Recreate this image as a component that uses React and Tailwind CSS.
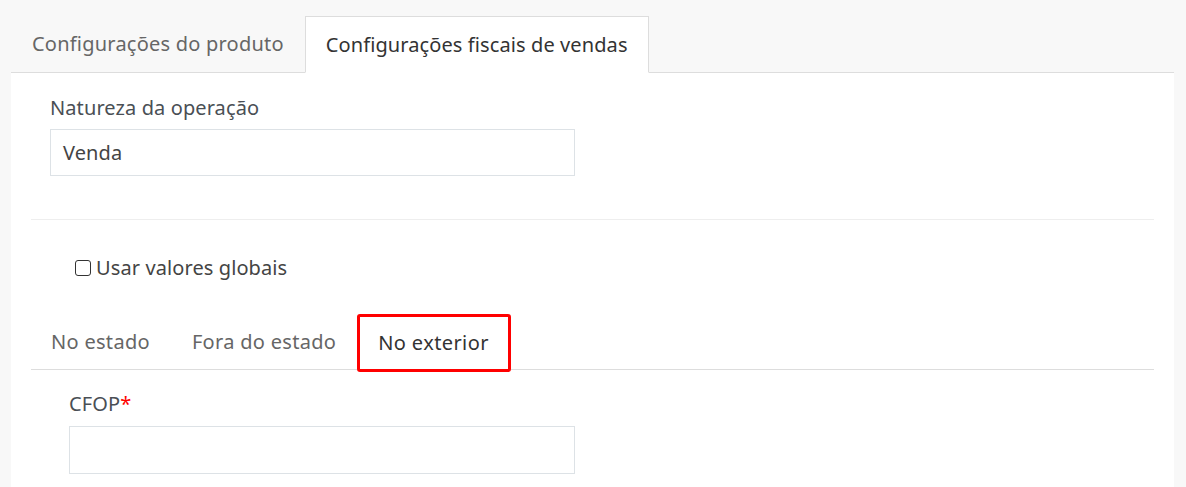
import { useState } from 'react';

const font = { fontFamily: '"Noto Sans", "Open Sans", sans-serif' };

const App = () => {
  const [tab, setTab] = useState('fiscal');
  const [region, setRegion] = useState('exterior');
  const [useGlobal, setUseGlobal] = useState(false);

  return (
    <div className="h-[487px] w-full bg-[#f8f8f8] pl-[11px] pr-[12px] pt-[16px] overflow-hidden" style={font}>
      {/* main tabs */}
      <div className="flex h-[57px] border-b border-[#dddddd]">
        <button
          type="button"
          onClick={() => setTab('produto')}
          className={`px-[21px] text-[20px] tracking-[0.22px] ${tab === 'produto' ? 'bg-white border border-[#dddddd] border-b-white -mb-px text-[#333]' : 'text-[#666]'}`}
        >
          Configurações do produto
        </button>
        <button
          type="button"
          onClick={() => setTab('fiscal')}
          className={`px-[20px] text-[20px] tracking-[0.1px] ${tab === 'fiscal' ? 'bg-white border border-[#dddddd] border-b-white -mb-px text-[#333]' : 'text-[#666]'}`}
        >
          Configurações fiscais de vendas
        </button>
      </div>

      <div className="bg-white h-full px-[20px]">
        <div className="px-[19px] pt-[23px] pb-[43px]">
          <label className="block text-[20px] leading-[24px] text-[#4a4f55] tracking-[0.1px]">Natureza da operação</label>
          <div className="mt-[9px] w-[525px] h-[47px] border border-[#dde2e6] flex items-center px-[12px] text-[20px] text-[#444] tracking-[0.1px]">
            Venda
          </div>
        </div>

        <div className="border-t border-[#eeeeee]" />

        <label className="flex gap-[5px] pl-[44px] pt-[35px] h-[94px] items-start text-[20px] leading-[26px] text-[#444] tracking-[0.1px] cursor-pointer">
          <span
            onClick={() => setUseGlobal(!useGlobal)}
            className="mt-[5px] w-[16px] h-[16px] rounded-[3px] border-[1.5px] border-[#333] bg-white flex items-center justify-center text-[11px]"
          >
            {useGlobal ? '✓' : ''}
          </span>
          Usar valores globais
        </label>

        <div className="flex h-[56px] border-b border-[#dddddd] items-start">
          <button type="button" onClick={() => setRegion('estado')} className="h-[55px] pl-[20px] pr-[21px] text-[20px] text-[#666] tracking-[0.3px]">
            No estado
          </button>
          <button type="button" onClick={() => setRegion('fora')} className="h-[55px] px-[21px] text-[20px] text-[#666] tracking-[0.3px]">
            Fora do estado
          </button>
          <button
            type="button"
            onClick={() => setRegion('exterior')}
            className={`h-[58px] pl-[18px] pr-[19px] text-[20px] tracking-[0.4px] ${region === 'exterior' ? 'border-[3px] border-[#ff0000] rounded-[3px] text-[#333]' : 'text-[#666]'}`}
          >
            No exterior
          </button>
        </div>

        <div className="px-[38px] pt-[22px]">
          <label className="block text-[20px] leading-[24px] text-[#4a4f55] tracking-[0.1px]">
            CFOP<span className="text-[#ff0000]">*</span>
          </label>
          <div className="mt-[10px] w-[506px] h-[48px] border border-[#dde2e6]" />
        </div>
      </div>
    </div>
  );
};

export default App;
